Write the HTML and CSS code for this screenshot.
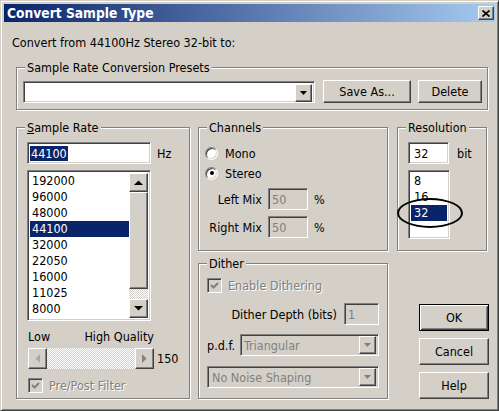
FILE: index.html
```html
<!DOCTYPE html>
<html lang="en">
<head>
  <meta charset="UTF-8">
  <title>Convert Sample Type</title>
  <link rel="stylesheet" href="styles.css">
</head>
<body>
  <div class="window">
    <div class="titlebar">
      <span class="title">Convert Sample Type</span>
      <span class="close">
        <svg width="8" height="7" viewBox="0 0 8 7"><path d="M0.5 0.5L7.5 6.5M7.5 0.5L0.5 6.5" stroke="#000" stroke-width="1.7"/></svg>
      </span>
    </div>

    <div class="content">
      <p class="intro">Convert from 44100Hz Stereo 32-bit to:</p>

      <!-- presets -->
      <div class="group presets">
        <span class="legend">Sample Rate Conversion Presets</span>
        <div class="preset-row">
          <div class="combo">
            <span class="drop"><svg width="7" height="4" viewBox="0 0 7 4"><path d="M0 0H7L3.5 4z" fill="#000"/></svg></span>
          </div>
          <div class="btn save">Save As...</div>
          <div class="btn delete">Delete</div>
        </div>
      </div>

      <div class="main">
        <!-- sample rate -->
        <div class="group rate">
          <span class="legend"><u>S</u>ample Rate</span>
          <div class="field-row">
            <div class="field rate-field"><span class="hl">44100</span></div>
            <span class="unit">Hz</span>
          </div>
          <div class="listbox rate-list">
            <ul class="items">
              <li>192000</li>
              <li>96000</li>
              <li>48000</li>
              <li class="selected">44100</li>
              <li>32000</li>
              <li>22050</li>
              <li>16000</li>
              <li>11025</li>
              <li>8000</li>
            </ul>
            <div class="vscroll">
              <span class="sb-btn"><svg width="9" height="5" viewBox="0 0 9 5"><path d="M0 5H9L4.5 0.5z" fill="#000"/></svg></span>
              <span class="thumb"></span>
              <span class="track"></span>
              <span class="sb-btn"><svg width="9" height="5" viewBox="0 0 9 5"><path d="M0 0H9L4.5 4.5z" fill="#000"/></svg></span>
            </div>
          </div>
          <div class="quality"><span>Low</span><span>High Quality</span></div>
          <div class="slider-row">
            <div class="hscroll">
              <span class="sb-btn h"><svg width="5" height="9" viewBox="0 0 5 9"><path d="M5 0V9L0.5 4.5z" fill="#a8a8a8"/></svg></span>
              <span class="track"></span>
              <span class="sb-btn h"><svg width="5" height="9" viewBox="0 0 5 9"><path d="M0 0V9L4.5 4.5z" fill="#808080"/></svg></span>
            </div>
            <span class="slider-val">150</span>
          </div>
          <div class="check-row">
            <span class="checkbox"><svg width="11" height="11" viewBox="0 0 11 11"><path d="M2 5L4.5 7.5L9 3" stroke="#808080" stroke-width="2" fill="none"/></svg></span>
            <span class="dis">Pre/Post Filter</span>
          </div>
        </div>

        <div class="col-mid">
          <!-- channels -->
          <div class="group channels">
            <span class="legend">Channels</span>
            <div class="radio-row first"><span class="radio"></span>Mono</div>
            <div class="radio-row"><span class="radio"><span class="dot"></span></span>Stereo</div>
            <div class="mix-row first">
              <span class="mix-label">Left Mix</span>
              <div class="field off mix-field">50</div>
              <span class="pct">%</span>
            </div>
            <div class="mix-row">
              <span class="mix-label">Right Mix</span>
              <div class="field off mix-field">50</div>
              <span class="pct">%</span>
            </div>
          </div>

          <!-- dither -->
          <div class="group dither">
            <span class="legend">Dither</span>
            <div class="check-row">
              <span class="checkbox"><svg width="11" height="11" viewBox="0 0 11 11"><path d="M2 5L4.5 7.5L9 3" stroke="#808080" stroke-width="2" fill="none"/></svg></span>
              <span class="dis">Enable Dithering</span>
            </div>
            <div class="depth-row">
              <span class="depth-label">Dither Depth (bits)</span>
              <div class="field off depth-field">1</div>
            </div>
            <div class="pdf-row">
              <span>p.d.f.</span>
              <div class="select pdf-select">
                <span class="select-text">Triangular</span>
                <span class="drop"><svg width="7" height="4" viewBox="0 0 7 4"><path d="M0 0H7L3.5 4z" fill="#808080"/></svg></span>
              </div>
            </div>
            <div class="select noise-select">
              <span class="select-text">No Noise Shaping</span>
              <span class="drop"><svg width="7" height="4" viewBox="0 0 7 4"><path d="M0 0H7L3.5 4z" fill="#808080"/></svg></span>
            </div>
          </div>
        </div>

        <div class="col-right">
          <!-- resolution -->
          <div class="group resolution">
            <span class="legend">Resolution</span>
            <div class="field-row">
              <div class="field res-field">32</div>
              <span class="unit bit">bit</span>
            </div>
            <div class="listbox res-list">
              <ul class="items">
                <li>8</li>
                <li>16</li>
                <li class="selected">32</li>
              </ul>
            </div>
            <span class="circle"></span>
          </div>

          <div class="buttons">
            <div class="btn default">OK</div>
            <div class="btn">Cancel</div>
            <div class="btn">Help</div>
          </div>
        </div>
      </div>
    </div>
  </div>
</body>
</html>
```

FILE: styles.css
```css
*{
  margin: 0;
  padding: 0;
  box-sizing: border-box;
}
body{
  font: 12.5px/15px "DejaVu Sans Condensed", "DejaVu Sans", sans-serif;
  color: #000;
  background: #d4d0c8;
}

/* window frame */
.window{
  width: 499px;
  height: 411px;
  padding: 3px;
  background: #d4d0c8;
  border: 1px solid;
  border-color: #d4d0c8 #404040 #404040 #d4d0c8;
  box-shadow: inset 1px 1px #fff, inset -1px -1px #808080;
}
.titlebar{
  height: 18px;
  display: flex;
  align-items: center;
  justify-content: space-between;
  padding: 0 1px 0 3px;
  background: linear-gradient(to right, #0a246a, #a6caf0);
}
.title{
  color: #fff;
  font-weight: bold;
  font-size: 13.7px;
  font-family: "DejaVu Sans Condensed", "DejaVu Sans", sans-serif;
}
.close{
  width: 16px;
  height: 14px;
  display: flex;
  align-items: center;
  justify-content: center;
}

/* 3d borders */
.close,.btn,.drop,.sb-btn,.thumb{
  background: #d4d0c8;
  border: 1px solid;
  border-color: #fff #404040 #404040 #fff;
  box-shadow: inset -1px -1px #808080, inset 1px 1px #d4d0c8;
}
.field,.listbox,.combo,.select,.checkbox{
  background: #fff;
  border: 1px solid;
  border-color: #808080 #fff #fff #808080;
  box-shadow: inset 1px 1px #404040, inset -1px -1px #d4d0c8;
}

.content{
  padding-left: 8px;
}
.intro{
  margin-top: 13px;
}

/* group boxes */
.group{
  --pl: 6px;
  position: relative;
  border: 1px solid #808080;
  box-shadow: 1px 1px #fff, inset 1px 1px #fff;
  padding-left: var(--pl);
}
.legend{
  display: block;
  width: fit-content;
  margin: -8px 0 0 calc(8px - var(--pl));
  padding: 0 2px;
  background: #d4d0c8;
}

.presets{
  width: 472px;
  margin: 17px 0 0 4px;
  padding-bottom: 6px;
}
.preset-row{
  display: flex;
  align-items: center;
  height: 23px;
  margin-top: 5px;
}
.combo{
  width: 292px;
  height: 22px;
  padding: 2px;
  display: flex;
  justify-content: flex-end;
}
.drop{
  width: 17px;
  height: 18px;
  display: flex;
  align-items: center;
  justify-content: center;
}
.btn{
  height: 23px;
  display: flex;
  align-items: center;
  justify-content: center;
}
.save{
  width: 88px;
  margin-left: 8px;
}
.delete{
  width: 64px;
  margin-left: 7px;
}

.main{
  display: flex;
  height: 272px;
  margin: 17px 0 0 4px;
}

/* sample rate */
.rate{
  --pl: 10px;
  width: 174px;
  flex-shrink: 0;
}
.field-row{
  display: flex;
  align-items: center;
  margin-top: 7px;
}
.field{
  height: 22px;
  padding: 0 3px;
  display: flex;
  align-items: center;
}
.rate-field{
  width: 124px;
  padding-left: 2px;
}
.hl{
  background: #0a246a;
  color: #fff;
  padding: 0 1px;
}
.unit{
  margin-left: 6px;
}
.listbox{
  display: flex;
  margin-top: 6px;
  padding: 2px;
}
.rate-list{
  width: 124px;
  height: 151px;
}
.items{
  list-style: none;
  flex: 1;
}
.items li{
  height: 16px;
  line-height: 16px;
  padding-left: 2px;
}
.items li.selected{
  background: #0a246a;
  color: #fff;
}
.vscroll{
  width: 19px;
  display: flex;
  flex-direction: column;
}
.sb-btn{
  height: 19px;
  display: flex;
  align-items: center;
  justify-content: center;
}
.sb-btn.h{
  width: 19px;
  height: 21px;
}
.thumb{
  height: 97px;
}
.track{
  flex: 1;
  background: repeating-conic-gradient(#fff 0 25%, #d4d0c8 0 50%) 0 0/2px 2px;
}
.quality{
  display: flex;
  justify-content: space-between;
  width: 127px;
  margin-top: 8px;
  padding-left: 1px;
}
.slider-row{
  display: flex;
  align-items: center;
  margin-top: 4px;
  padding-left: 1px;
}
.hscroll{
  display: flex;
  width: 126px;
  height: 21px;
}
.slider-val{
  margin-left: 3px;
}
.check-row{
  display: flex;
  align-items: center;
  height: 15px;
  margin-top: 9px;
  padding-left: 1px;
}
.checkbox{
  width: 15px;
  height: 15px;
  margin-right: 6px;
  background: #d4d0c8;
  display: flex;
  align-items: center;
  justify-content: center;
}
.dis{
  color: #808080;
  text-shadow: 1px 1px #fff;
}

/* middle column */
.col-mid{
  width: 190px;
  margin-left: 8px;
  flex-shrink: 0;
  display: flex;
  flex-direction: column;
}
.channels{
  height: 124px;
}
.radio-row{
  display: flex;
  align-items: center;
  height: 20px;
}
.radio-row.first{
  margin-top: 8px;
}
.radio{
  width: 13px;
  height: 13px;
  margin-right: 7px;
  border-radius: 50%;
  background: #fff;
  border: 1px solid;
  border-color: #808080 #fff #fff #808080;
  box-shadow: inset 1px 1px #404040, inset -1px -1px #d4d0c8;
  display: flex;
  align-items: center;
  justify-content: center;
}
.dot{
  width: 4px;
  height: 4px;
  border-radius: 50%;
  background: #000;
}
.mix-row{
  display: flex;
  align-items: center;
  height: 22px;
  margin-top: 6px;
}
.mix-row.first{
  margin-top: 5px;
}
.mix-label{
  width: 57px;
  text-align: right;
  margin-right: 6px;
}
.field.off{
  background: #d4d0c8;
  color: #808080;
}
.mix-field{
  width: 40px;
}
.pct{
  margin-left: 6px;
}

.dither{
  --pl: 8px;
  height: 136px;
  margin-top: 12px;
  padding-right: 8px;
}
.dither .check-row{
  margin-top: 7px;
  padding-left: 0;
}
.depth-row{
  display: flex;
  align-items: center;
  justify-content: flex-end;
  height: 22px;
  margin-top: 10px;
}
.depth-label{
  margin-right: 7px;
}
.depth-field{
  width: 35px;
}
.pdf-row{
  display: flex;
  align-items: center;
  justify-content: space-between;
  margin-top: 9px;
}
.select{
  height: 22px;
  padding: 2px;
  background: #d4d0c8;
  color: #808080;
  display: flex;
  align-items: center;
}
.select-text{
  flex: 1;
  padding-left: 2px;
}
.pdf-select{
  width: 139px;
}
.pdf-select .select-text{
  padding-left: 1px;
}
.noise-select{
  margin-top: 10px;
}

/* right column */
.col-right{
  width: 92px;
  margin-left: 9px;
  flex-shrink: 0;
  display: flex;
  flex-direction: column;
}
.resolution{
  --pl: 10px;
  width: 90px;
  height: 124px;
}
.res-field{
  width: 41px;
  padding-left: 5px;
}
.unit.bit{
  margin-left: 8px;
}
.res-list{
  width: 42px;
  height: 69px;
}
.res-list .items li{
  padding-left: 3px;
}
.circle{
  position: absolute;
  left: -1px;
  top: 70px;
  width: 66px;
  height: 30px;
  border: 2px solid #000;
  border-radius: 50%;
}
.buttons{
  margin-top: auto;
  align-self: flex-end;
  width: 70px;
  display: flex;
  flex-direction: column;
  gap: 7px;
}
.buttons .btn{
  height: 27px;
}
.btn.default{
  border-color: #000;
  box-shadow: inset 1px 1px #fff, inset -1px -1px #404040, inset 2px 2px #d4d0c8, inset -2px -2px #808080;
}
```
